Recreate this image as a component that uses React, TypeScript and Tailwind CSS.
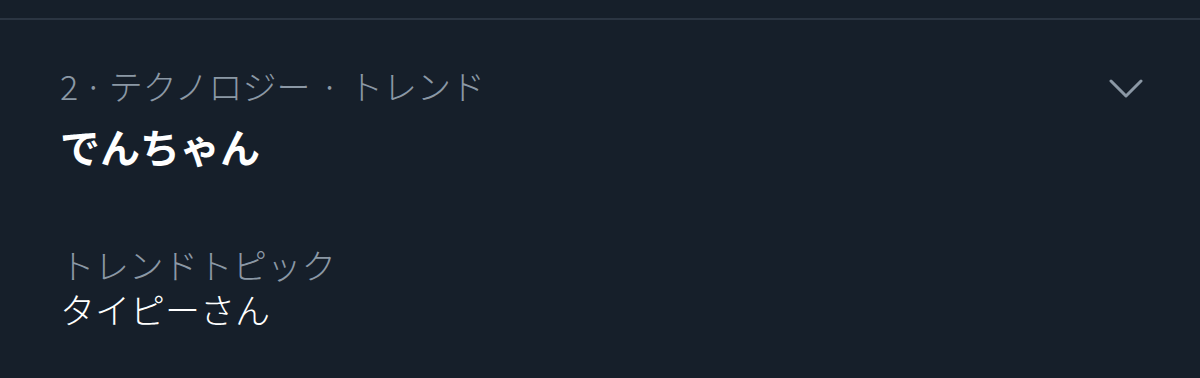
import React from 'react';

const jp = { fontFamily: '"Noto Sans CJK JP", "Noto Sans", sans-serif' };

export default function App() {
  return (
    <div className="w-[1200px] h-[378px] bg-[#161f2a] overflow-hidden" style={jp}>
      <div className="h-[18px]" />
      <div className="h-[2px] bg-[#2b3542]" />
      <div className="flex justify-between pl-[60px] pr-[57px] pt-[46px]">
        <div className="flex flex-col">
          <div className="flex items-center text-[34px] leading-[40px] font-light text-[#8b98a5]">
            <span>2</span>
            <span className="mx-[6px]">·</span>
            <span>テクノロジー</span>
            <span className="mx-[10px]">·</span>
            <span>トレンド</span>
          </div>
          <div className="mt-[18px] text-[40px] leading-[44px] font-bold text-white">でんちゃん</div>
          <div className="mt-[74px] text-[34.5px] leading-[44px] font-light text-[#8b98a5]">トレンドトピック</div>
          <div className="mt-[1px] text-[35px] leading-[44px] font-light text-white">タイピーさん</div>
        </div>
        <svg width="34" height="20" viewBox="0 0 34 20" className="mt-[13px]">
          <path d="M2 2 L17 17 L32 2" fill="none" stroke="#8b98a5" strokeWidth="3" strokeLinecap="round" strokeLinejoin="round" />
        </svg>
      </div>
    </div>
  );
}
